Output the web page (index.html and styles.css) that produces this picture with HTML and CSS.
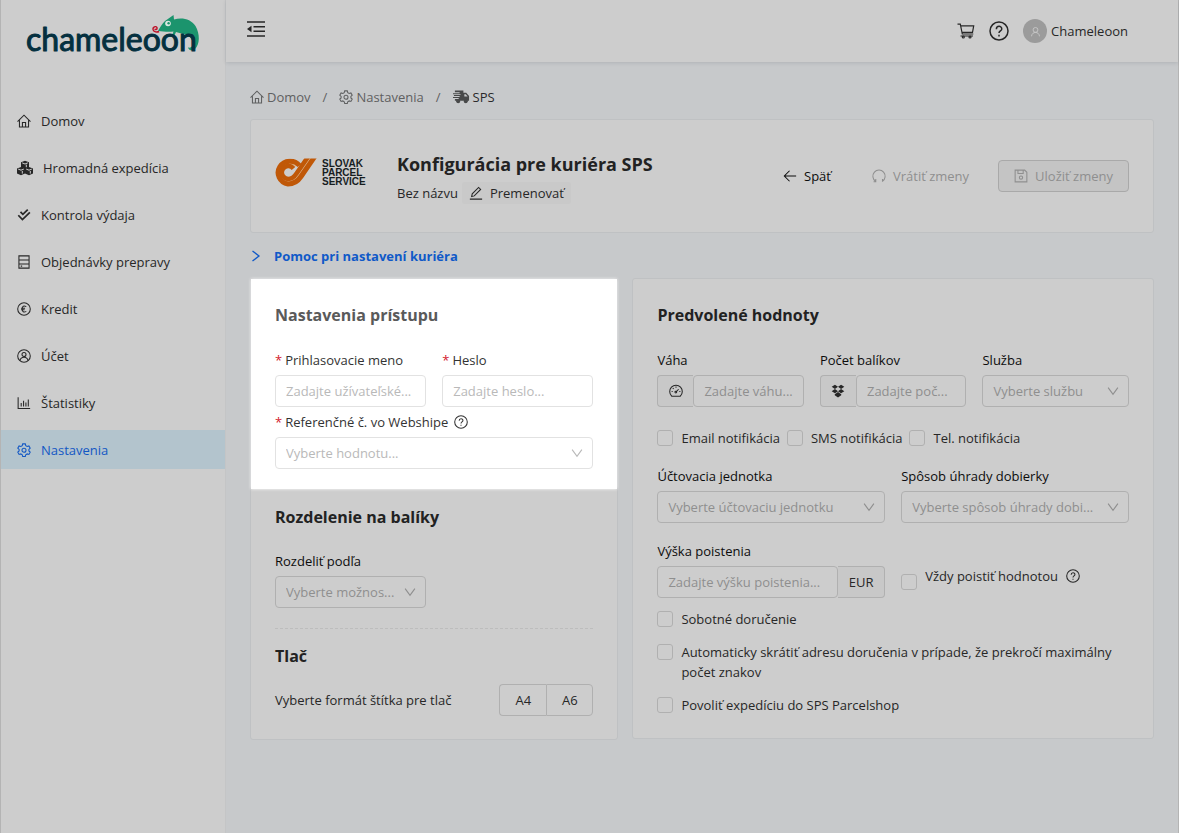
FILE: index.html
```html
<!DOCTYPE html>
<html lang="sk">
<head>
<meta charset="utf-8">
<title>Chameleoon – Konfigurácia kuriéra</title>
<link rel="stylesheet" href="styles.css">
</head>
<body>
<svg class="sprite" aria-hidden="true">
  <symbol id="home" viewBox="0 0 16 16"><path d="M.6 8.600 8 1.300l7.400 7.300M2.800 7v7.800h10.400V7M6.200 14.800V9.800h3.600v5"/></symbol>
  <symbol id="gear" viewBox="0 0 16 16"><path d="M6.500 1h3l.5 2 1.600.9 2-.6 1.500 2.600-1.500 1.400v1.800l1.500 1.400-1.500 2.600-2-.6-1.600.9-.5 2h-3L6 13.400l-1.600-.9-2 .6L.9 10.500l1.500-1.400V7.300L.9 5.900l1.500-2.600 2 .6L6 3z"/><circle cx="8" cy="8.200" r="2.300"/></symbol>
  <symbol id="help" viewBox="0 0 16 16"><circle cx="8" cy="8" r="7.200"/><path d="M5.900 6.500c0-3 4.300-2.900 4.300-.2 0 1.500-2.200 1.700-2.200 3.300M8 11v1.300"/></symbol>
  <symbol id="down" viewBox="0 0 16 16"><path d="m1.500 3.500 6.500 9 6.500-9"/></symbol>
</svg>
<div class="app">
  <aside class="sidebar">
    <a class="brand" href="#" aria-label="chameleoon">
      <svg width="180" height="48" viewBox="24 10 180 48">
        <path fill="#1b946d" stroke="none" d="M158 31c2-4 4-7 7-10l8.500-6 .5 4.500c8-2.500 17-.5 21.500 6.500 4.500 8 4.500 18-.5 23-2 2-6 2-7-1.500 4.500 1 5.500-3 4-7-1.500-4-5-6-9-6.500l-7-2-2 4.500-2.500.5 2-5.500c-5 .5-11 0-15-.5z"/>
        <circle cx="168" cy="23.500" r="2.800" fill="#dce8e2" stroke="none"/><circle cx="168.600" cy="23.200" r="1.200" fill="#1b946d" stroke="none"/>
        <path stroke="#bd1229" stroke-width="1.400" d="M159 31.500c-2 1-5 .5-5.800-1.500-1-3 2.800-4.500 3.800-2.400.6 1.800-1.600 2.700-2.200 1.200"/>
        <text class="brand-name" x="26" y="51">chameleoon</text>
      </svg>
    </a>
    <nav class="menu">
      <a href="#"><svg class="ico"><use href="#home"/></svg>Domov</a>
      <a href="#"><svg class="ico ico-cubes" viewBox="0 0 16 16"><path class="solid" d="m8 .8 4 1.500v4.700L8 8.500 4 7V2.300zM4 7l4 1.500v5L4 15.300 0 13.500v-5zM12 7l4 1.500v5l-4 1.800-4-1.800v-5z"/><path class="cut" d="m5.200 2.900 2.800 1.100 2.800-1.100M9.300 4.600v2.600M1.200 9.100 4 10.200l2.800-1.100M5.300 11v2.600M9.200 9.100l2.800 1.100 2.800-1.100M13.300 11v2.600"/></svg>Hromadná expedícia</a>
      <a href="#"><svg class="ico" viewBox="0 0 16 16"><path class="bold" d="m4 4.500 2.700 2.700 5.600-5.400M1.500 8.300l4.700 4.900L14.700 5"/></svg>Kontrola výdaja</a>
      <a href="#"><svg class="ico" viewBox="0 0 16 16"><path d="M2.200 1h11.600v14H2.200zM2.200 5.600h11.600M2.200 10.300h11.600M4.300 12.700h1.600"/></svg>Objednávky prepravy</a>
      <a href="#"><svg class="ico" viewBox="0 0 16 16"><circle cx="8" cy="8" r="7.200"/><path d="M10.600 5.300c-2.800-1.800-4.700-.3-4.700 2.700s1.900 4.500 4.700 2.700M4.700 7.200h4.500M4.700 8.900h4"/></svg>Kredit</a>
      <a href="#"><svg class="ico" viewBox="0 0 16 16"><circle cx="8" cy="8" r="7.200"/><circle cx="8" cy="6.300" r="2.300"/><path d="M3.400 13.200c1.200-5 8-5 9.200 0"/></svg>Účet</a>
      <a href="#"><svg class="ico" viewBox="0 0 16 16"><path d="M1.300 1.500v12.700H15M4.800 12V8M7.500 12V5.500M10.200 12V7.500M12.900 12V4"/></svg>Štatistiky</a>
      <a class="active" href="#" aria-current="page"><svg class="ico"><use href="#gear"/></svg>Nastavenia</a>
    </nav>
  </aside>
  <div class="body">
    <header class="topbar">
      <button class="plain fold" aria-label="Zbaliť menu"><svg class="ico-fold" viewBox="0 0 18 16"><path d="M0 1h18M6.500 5.700H18M6.500 10.300H18M0 15h18"/><path class="solid" d="M0 8l4.500-3.200v6.400z"/></svg></button>
      <div class="tools">
        <button class="plain" aria-label="Košík"><svg class="ico-cart" viewBox="0 0 18 16"><path d="M.5 1.200h2.800l2 9.800h11M3.700 2.800h13l-1.200 6.500H5M3.500 13h12.500"/><circle cx="6.300" cy="14" r="1"/><circle cx="13" cy="14" r="1"/></svg></button>
        <button class="plain" aria-label="Pomoc"><svg class="ico-help"><use href="#help"/></svg></button>
        <a class="user" href="#"><span class="avatar"><svg class="ico" viewBox="0 0 16 16"><circle cx="8" cy="5.700" r="3.500"/><path d="M2.200 15c.4-7.500 11.200-7.500 11.600 0"/></svg></span>Chameleoon</a>
      </div>
    </header>
    <main class="content">
      <nav class="crumbs" aria-label="Cesta">
        <a href="#"><svg class="ico"><use href="#home"/></svg>Domov</a><span>/</span>
        <a href="#"><svg class="ico"><use href="#gear"/></svg>Nastavenia</a><span>/</span>
        <a class="current" href="#"><svg class="ico-truck" viewBox="0 0 18 14"><path class="solid" d="M2 0h9v2.500h3l3 3.500v5h-1.500a2 2 0 0 1-4 0H7.500a2 2 0 0 1-4 0H2V9h4V8H0V7h7V6H1V5h7V4H0V3h7V2H2zM12 4v2.500h3.500L13.500 4z"/><circle class="solid" cx="5.500" cy="11.500" r="2"/><circle class="solid" cx="13.500" cy="11.500" r="2"/></svg>SPS</a>
      </nav>
      <section class="card hero">
        <svg class="carrier" width="93" height="66" viewBox="274 142 93 66" role="img" aria-label="Slovak Parcel Service">
          <clipPath id="cut"><path d="M274 157.500h93v40h-93z"/></clipPath>
          <g clip-path="url(#cut)">
            <path stroke="#dcb892" stroke-width="2" d="M296 165a9 9 0 1 0-8 15.500c5 0 8-2.500 10.500-6L312 154"/>
            <path stroke="#c05808" stroke-width="5" d="M299.500 164.500A12 11.500 0 1 0 288 183c6 0 10-3 13-7.500L316.500 153"/>
            <path stroke="#c05808" stroke-width="4.500" d="M293.500 167.500A6.500 6.500 0 1 0 288 178c4 0 6.500-2.500 8.500-5.500L310 153"/>
          </g>
          <g class="carrier-name"><text x="322" y="166">SLOVAK</text><text x="322" y="175">PARCEL</text><text x="322" y="184">SERVICE</text></g>
        </svg>
        <div class="hero-text">
          <h1>Konfigurácia pre kuriéra SPS</h1>
          <div class="rename">Bez názvu <button class="btn-soft"><svg class="ico" viewBox="0 0 16 16"><path d="M1 15h14M3 12l.7-3L11 1.600l2.300 2.300L6 11.300z"/></svg>Premenovať</button></div>
        </div>
        <div class="actions">
          <button class="btn back"><svg class="ico" viewBox="0 0 16 16"><path d="M15 8H1.500M7.500 2l-6 6 6 6"/></svg>Späť</button>
          <button class="btn" disabled><svg class="ico" viewBox="0 0 16 16"><path d="M4 14A7 7 0 1 1 12 14M4.300 11.500V14.500H1.800M12 11.500v3"/></svg>Vrátiť zmeny</button>
          <button class="btn save" disabled><svg class="ico" viewBox="0 0 16 16"><path d="M1.300 1.300h10.900l2.500 2.500v10.900H1.300zM4.500 1.500v3.700h6V1.500"/><circle cx="8" cy="9.800" r="1.900"/></svg>Uložiť zmeny</button>
        </div>
      </section>
      <a class="guide" href="#"><svg class="ico-next" viewBox="0 0 10 14"><path d="m1.500 2 6.500 5-6.500 5"/></svg>Pomoc pri nastavení kuriéra</a>
      <div class="columns">
        <form class="card">
          <section class="spotlight">
            <h2>Nastavenia prístupu</h2>
            <div class="row two">
              <div class="field"><label for="login"><i>*</i>Prihlasovacie meno</label><input id="login" type="text" placeholder="Zadajte užívateľské..."></div>
              <div class="field"><label for="pass"><i>*</i>Heslo</label><input id="pass" type="password" placeholder="Zadajte heslo..."></div>
            </div>
            <div class="field">
              <label for="ref"><i>*</i>Referenčné č. vo Webshipe <svg class="ico"><use href="#help"/></svg></label>
              <div class="pick"><select id="ref"><option>Vyberte hodnotu...</option></select><svg><use href="#down"/></svg></div>
            </div>
          </section>
          <section class="part">
            <h2>Rozdelenie na balíky</h2>
            <div class="row two">
              <div class="field"><label for="split">Rozdeliť podľa</label><div class="pick"><select id="split"><option>Vyberte možnos...</option></select><svg><use href="#down"/></svg></div></div>
            </div>
            <hr>
            <h2>Tlač</h2>
            <div class="print"><span>Vyberte formát štítka pre tlač</span><div class="segment"><button type="button">A4</button><button type="button">A6</button></div></div>
          </section>
        </form>
        <form class="card defaults">
          <h2>Predvolené hodnoty</h2>
          <div class="row three">
            <div class="field"><label for="weight">Váha</label><div class="group"><span class="addon"><svg class="ico" viewBox="0 0 16 16"><path d="M3.200 14a7.200 7.200 0 1 1 9.600 0zM8 9l3-3M8 2.800v1.500M3 8.500h1.200M4.300 4.700l1 1M11.800 8.500H13"/><circle cx="7.800" cy="9.200" r="1"/></svg></span><input id="weight" type="text" placeholder="Zadajte váhu..."></div></div>
            <div class="field"><label for="count">Počet balíkov</label><div class="group"><span class="addon"><svg class="ico" viewBox="0 0 16 16"><path class="solid" d="M4.500.8 8 3.200 4.500 5.600.8 3.200zM11.500.8l3.700 2.400-3.700 2.400L8 3.200zM4.500 5.800 8 8.200l-3.500 2.400L.8 8.200zM11.500 5.800l3.700 2.400-3.700 2.400L8 8.200zM4.300 11.600l3.700-2.500 3.700 2.500v1.300L8 15.400l-3.700-2.500z"/></svg></span><input id="count" type="text" placeholder="Zadajte poč..."></div></div>
            <div class="field"><label for="service">Služba</label><div class="pick"><select id="service"><option>Vyberte službu</option></select><svg><use href="#down"/></svg></div></div>
          </div>
          <div class="checks">
            <label class="check"><input type="checkbox">Email notifikácia</label>
            <label class="check"><input type="checkbox">SMS notifikácia</label>
            <label class="check"><input type="checkbox">Tel. notifikácia</label>
          </div>
          <div class="row two">
            <div class="field"><label for="unit">Účtovacia jednotka</label><div class="pick"><select id="unit"><option>Vyberte účtovaciu jednotku</option></select><svg><use href="#down"/></svg></div></div>
            <div class="field"><label for="cod">Spôsob úhrady dobierky</label><div class="pick"><select id="cod"><option>Vyberte spôsob úhrady dobi...</option></select><svg><use href="#down"/></svg></div></div>
          </div>
          <div class="row two insurance">
            <div class="field"><label for="ins">Výška poistenia</label><div class="group"><input id="ins" type="text" placeholder="Zadajte výšku poistenia..."><span class="addon unit">EUR</span></div></div>
            <label class="check always"><input type="checkbox"><span>Vždy poistiť hodnotou <svg class="ico"><use href="#help"/></svg></span></label>
          </div>
          <div class="stack">
            <label class="check"><input type="checkbox">Sobotné doručenie</label>
            <label class="check"><input type="checkbox">Automaticky skrátiť adresu doručenia v prípade, že prekročí maximálny počet znakov</label>
            <label class="check"><input type="checkbox">Povoliť expedíciu do SPS Parcelshop</label>
          </div>
        </form>
      </div>
    </main>
  </div>
</div>
</body>
</html>
```
FILE: styles.css
```css
:root {
  --surface: #cdcdcd;
  --page: #c7c9cb;
  --edge: #bfc1c3;
  --line: #b0b0b0;
  --text: #272727;
  --label: #0c0c0c;
  --hint: #8f8f8f;
  --blue: #1257c4;
}
* { box-sizing: border-box; }
body {
  margin: 0;
  background: var(--page);
  color: var(--text);
  font: 13px/20px "Open Sans", "Noto Sans", sans-serif;
}
a { color: inherit; text-decoration: none; }
button, input, select { font: inherit; color: inherit; }
svg { fill: none; stroke: currentColor; flex: none; }
svg text { stroke: none; }
.sprite { position: absolute; width: 0; height: 0; }
.solid { fill: currentColor; stroke: none; }
.cut { stroke: var(--surface); stroke-width: 1; }
.bold { stroke-width: 2; }
.ico { width: 14px; height: 14px; stroke-width: 1.2; }
.app { display: flex; min-height: 100vh; border: solid #b4b4b4; border-width: 0 1px; }
.sidebar { flex: none; width: 225px; background: var(--surface); border-right: 1px solid #c4c5c6; }
.brand { display: block; padding: 10px 0 0 23px; height: 101px; }
.brand svg { display: block; }
svg .brand-name { font: 400 32px "Lato", sans-serif; fill: #04303f; stroke: #04303f; stroke-width: 1; stroke-linejoin: round; }
.menu { display: flex; flex-direction: column; gap: 8px; }
.menu a { display: flex; align-items: center; gap: 10px; height: 39px; padding-left: 16px; }
.menu .ico-cubes { width: 16px; height: 16px; }
.menu .active { background: #b3c4cd; color: var(--blue); }
.body { flex: 1; min-width: 0; }
.topbar {
  display: flex; align-items: center; justify-content: space-between;
  height: 62px; padding: 0 50px 0 21px;
  background: var(--surface); box-shadow: 0 1px 4px rgba(0, 21, 41, .12);
}
.plain { display: flex; padding: 0; border: 0; background: none; }
.fold { padding-bottom: 4px; }
.tools { display: flex; align-items: center; gap: 14px; }
.ico-fold { width: 18px; height: 16px; stroke-width: 1.6; }
.ico-cart { width: 18px; height: 16px; stroke-width: 1.2; }
.ico-help { width: 20px; height: 20px; stroke-width: 1.2; }
.user { display: flex; align-items: center; gap: 4px; }
.avatar { display: flex; align-items: center; justify-content: center; width: 24px; height: 24px; border-radius: 50%; background: #9b9b9b; color: var(--surface); }
.avatar .ico { width: 11px; height: 11px; }
.content { padding: 24px; }
.crumbs { display: flex; align-items: center; gap: 12px; height: 22px; margin-bottom: 11px; color: #5f6061; }
.crumbs a { display: flex; align-items: center; gap: 3px; }
.crumbs .current { color: #2a2a2b; }
.ico-truck { width: 17px; height: 14px; color: #48494a; }
.card { background: var(--surface); border: 1px solid var(--edge); border-radius: 3px; }
.hero { display: flex; align-items: center; height: 114px; padding: 0 24px 0 23px; }
.hero-text { margin-left: 30px; padding-top: 6px; }
h1, h2 { margin: 0; font-weight: 700; color: #222; }
h1 { font-size: 18px; line-height: 28px; }
h2 { font-size: 16px; line-height: 24px; margin-bottom: 22px; }
.carrier-name { font: 700 10px "Liberation Sans", sans-serif; fill: #171d1f; }
.rename { display: flex; align-items: center; gap: 4px; height: 30px; }
.btn-soft { display: flex; align-items: center; gap: 7px; padding: 1px 7px; border: 0; border-radius: 3px; background: #c9c9c9; }
.actions { display: flex; gap: 9px; margin-left: auto; }
.btn { display: flex; align-items: center; gap: 7px; height: 32px; padding: 0 15px; border: 1px solid transparent; border-radius: 4px; background: none; }
.back { color: var(--label); }
.btn:disabled { color: var(--hint); }
.save:disabled { background: #c4c4c4; border-color: #a9a9a9; margin-left: 4px; }
.guide { display: flex; align-items: center; gap: 13px; height: 22px; margin: 12px 0 11px; padding-left: 1px; font-weight: 700; color: #1059c8; }
.ico-next { width: 10px; height: 14px; stroke-width: 1.3; }
.columns { display: grid; grid-template-columns: 368fr 521fr; gap: 14px; align-items: start; }
.spotlight {
  --surface: #fff; --line: #e2e2e2; --label: #333; --hint: #b9b9b9;
  padding: 24px 24px 20px; background: #fff;
  box-shadow: 0 0 3px #fff;
}
.spotlight h2 { color: #5a5a5a; }
.part { padding: 16px 24px 23px; }
.part h2 { margin-bottom: 21px; }
.row { display: grid; gap: 16px; }
.two { grid-template-columns: 1fr 1fr; }
.three { grid-template-columns: 1fr 1fr 1fr; }
.field { min-width: 0; }
.field label { display: flex; align-items: center; height: 22px; margin-bottom: 4px; color: var(--label); }
.field label i { margin-right: 3px; font-style: normal; color: #d3202c; }
.field label .ico { margin-left: 6px; }
.spotlight .row { margin-bottom: 4px; }
.field input, .pick select {
  display: block; width: 100%; min-width: 0; height: 32px; padding: 0 10px;
  border: 1px solid var(--line); border-radius: 4px; outline: 0;
  background: var(--surface); appearance: none;
}
.field input::placeholder { color: var(--hint); opacity: 1; }
.pick { display: grid; align-items: center; }
.pick > * { grid-area: 1 / 1; }
.pick select { color: var(--hint); padding-right: 28px; }
.pick svg { justify-self: end; width: 12px; height: 12px; margin-right: 10px; color: var(--hint); stroke-width: 1.5; pointer-events: none; }
hr { margin: 20px 0 15px; border: 0; border-top: 1px dashed #bdbdbd; }
.part hr + h2 { margin-bottom: 16px; }
.print { display: flex; align-items: center; justify-content: space-between; }
.segment { display: flex; }
.segment button { width: 47px; height: 32px; padding: 0; border: 1px solid var(--line); background: none; }
.segment button:first-child { border-right: 0; border-radius: 4px 0 0 4px; }
.segment button:last-child { border-radius: 0 4px 4px 0; }
.defaults { padding: 24px 24px 23px; }
.group { display: flex; }
.group input { flex: 1; }
.addon { flex: none; display: flex; align-items: center; justify-content: center; width: 36px; border: 1px solid var(--line); border-right: 0; border-radius: 4px 0 0 4px; background: #c8c8c8; }
.unit { width: 47px; border: 1px solid var(--line); border-left: 0; border-radius: 0 4px 4px 0; }
.checks { display: flex; gap: 7px; margin: 21px 0 17px; }
.check { display: flex; align-items: flex-start; gap: 8px; }
.check input { flex: none; width: 16px; height: 16px; margin: 2px 0; border: 1px solid var(--line); border-radius: 3px; appearance: none; }
.insurance { margin: 17px 0 11px; }
.always { align-self: end; }
.always input { margin: 8px 0; }
.always span { display: flex; align-items: center; gap: 8px; }
.stack { display: flex; flex-direction: column; gap: 13px; }
```
